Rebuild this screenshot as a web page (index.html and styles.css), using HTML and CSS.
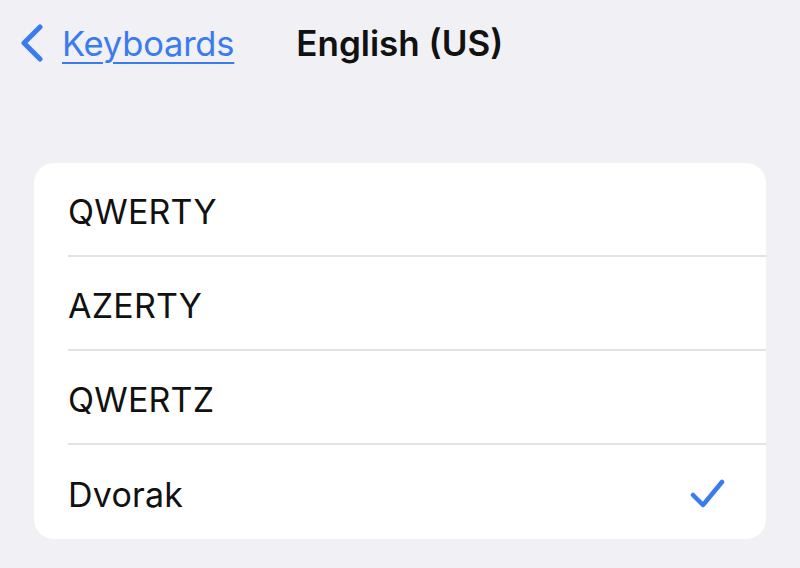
FILE: index.html
```html
<!DOCTYPE html>
<html>
<head>
<meta charset="utf-8">
<link rel="stylesheet" href="styles.css">
</head>
<body>
<div class="page">
  <header class="nav">
    <a class="back" href="#">
      <svg class="chev" width="26" height="38" viewBox="0 0 26 38"><path d="M21 3 L5 19 L21 35" fill="none" stroke="#3a7bef" stroke-width="5" stroke-linecap="round" stroke-linejoin="round"/></svg>
      <span class="back-label">Keyboards</span>
    </a>
    <h1 class="title">English (US)</h1>
  </header>
  <ul class="list">
    <li class="row"><span class="label">QWERTY</span></li>
    <li class="row"><span class="label">AZERTY</span></li>
    <li class="row"><span class="label">QWERTZ</span></li>
    <li class="row"><span class="label">Dvorak</span>
      <svg class="check" width="36" height="34" viewBox="0 0 36 34"><path d="M3 18 L13 28 L32 5" fill="none" stroke="#3a7bef" stroke-width="4.5" stroke-linecap="round" stroke-linejoin="round"/></svg>
    </li>
  </ul>
</div>
</body>
</html>
```
FILE: styles.css
```css
html, body {
  margin: 0;
  padding: 0;
  background: #f0f0f5;
  font-family: Inter, "Liberation Sans", sans-serif;
  color: #111;
}
.page {
  width: 800px;
  height: 568px;
  overflow: hidden;
}
.nav {
  display: flex;
  align-items: center;
  height: 86px;
  padding-left: 19px;
}
.back {
  display: flex;
  align-items: center;
  text-decoration: none;
  color: #3a7bef;
}
.chev {
  display: block;
  margin-right: 17px;
}
.back-label {
  font-size: 34.5px;
  text-decoration: underline;
  text-decoration-thickness: 2px;
  text-underline-offset: 6px;
  letter-spacing: -0.2px;
}
.title {
  margin: 0 0 0 62px;
  font-size: 35px;
  font-weight: 600;
  color: #111;
  letter-spacing: 0;
}
.list {
  list-style: none;
  margin: 77px 34px 0 34px;
  padding: 0;
  background: #fff;
  border-radius: 20px;
  overflow: hidden;
}
.row {
  display: flex;
  align-items: center;
  justify-content: space-between;
  height: 94px;
  margin-left: 34px;
  padding-right: 42px;
  padding-top: 4px;
  border-bottom: 2px solid #e3e3e6;
  box-sizing: border-box;
}
.row:last-child {
  border-bottom: none;
}
.label {
  font-size: 34px;
  letter-spacing: 0.2px;
}
.check {
  display: block;
  margin-right: -2px;
}
```
